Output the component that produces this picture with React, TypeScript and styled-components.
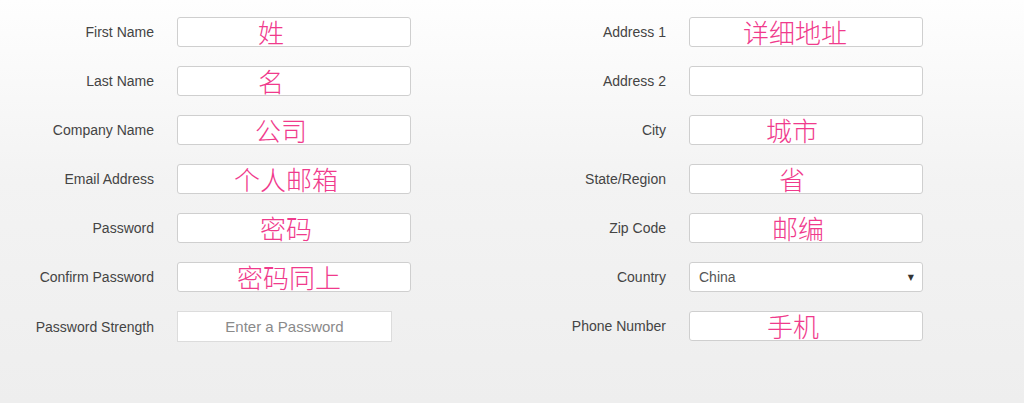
import styled, { createGlobalStyle } from 'styled-components'

const GlobalStyle = createGlobalStyle`
  html, body {
    margin: 0;
    padding: 0;
  }
  body {
    font-family: 'Liberation Sans', Arial, sans-serif;
  }
`

type FieldRow = {
  label: string
  note?: string
  offset?: number
  kind?: 'text' | 'select' | 'strength'
  value?: string
}

const leftRows: FieldRow[] = [
  { label: 'First Name', note: '姓', offset: 80 },
  { label: 'Last Name', note: '名', offset: 80 },
  { label: 'Company Name', note: '公司', offset: 77 },
  { label: 'Email Address', note: '个人邮箱', offset: 56 },
  { label: 'Password', note: '密码', offset: 82 },
  { label: 'Confirm Password', note: '密码同上', offset: 59 },
  { label: 'Password Strength', kind: 'strength', value: 'Enter a Password' },
]

const rightRows: FieldRow[] = [
  { label: 'Address 1', note: '详细地址', offset: 53 },
  { label: 'Address 2' },
  { label: 'City', note: '城市', offset: 76 },
  { label: 'State/Region', note: '省', offset: 89 },
  { label: 'Zip Code', note: '邮编', offset: 82 },
  { label: 'Country', kind: 'select', value: 'China' },
  { label: 'Phone Number', note: '手机', offset: 77 },
]

const FormColumn = ({ rows }: { rows: FieldRow[] }) => {
  return (
    <Column>
      {rows.map((row) => (
        <Row key={row.label}>
          <Label>{row.label}</Label>
          {row.kind === 'select' ? (
            <SelectBox>
              <SelectValue>{row.value}</SelectValue>
              <Caret>▼</Caret>
            </SelectBox>
          ) : row.kind === 'strength' ? (
            <StrengthBox>{row.value}</StrengthBox>
          ) : (
            <TextBox>{row.note && <Note offset={row.offset ?? 0}>{row.note}</Note>}</TextBox>
          )}
        </Row>
      ))}
    </Column>
  )
}

export default function App() {
  return (
    <>
      <GlobalStyle />
      <Page>
        <FormColumn rows={leftRows} />
        <FormColumn rows={rightRows} />
      </Page>
    </>
  )
}

const Page = styled.div`
  box-sizing: border-box;
  width: 1024px;
  height: 403px;
  padding: 17px 0 0 0;
  display: flex;
  gap: 101px;
  background: linear-gradient(to bottom, #fefefe 0%, #f3f3f3 45%, #eeeeee 100%);
`

const Column = styled.div`
  display: flex;
  flex-direction: column;
  gap: 19px;
`

const Row = styled.div`
  display: grid;
  grid-template-columns: 154px 234px;
  column-gap: 23px;
  align-items: center;
  height: 30px;
`

const Label = styled.div`
  text-align: right;
  font-size: 14px;
  color: #444;
`

const TextBox = styled.div`
  box-sizing: border-box;
  height: 30px;
  background: #fff;
  border: 1px solid #cfcfcf;
  border-radius: 3px;
  display: flex;
  align-items: center;
`

const Note = styled.span<{ offset: number }>`
  padding-left: ${({ offset }) => offset}px;
  font-family: 'Noto Sans CJK SC', sans-serif;
  font-size: 26px;
  font-weight: 300;
  line-height: 26px;
  color: #f03a8c;
  white-space: nowrap;
`

const StrengthBox = styled.div`
  box-sizing: border-box;
  width: 215px;
  height: 31px;
  background: #fff;
  border: 1px solid #dcdcdc;
  display: flex;
  align-items: center;
  justify-content: center;
  font-size: 15px;
  color: #8a8a8a;
`

const SelectBox = styled.div`
  box-sizing: border-box;
  height: 30px;
  background: #fff;
  border: 1px solid #cfcfcf;
  border-radius: 3px;
  display: flex;
  align-items: center;
  justify-content: space-between;
  padding: 0 8px 0 9px;
`

const SelectValue = styled.span`
  font-size: 14px;
  color: #555;
`

const Caret = styled.span`
  font-size: 8px;
  color: #333;
  font-family: 'DejaVu Sans', sans-serif;
`
